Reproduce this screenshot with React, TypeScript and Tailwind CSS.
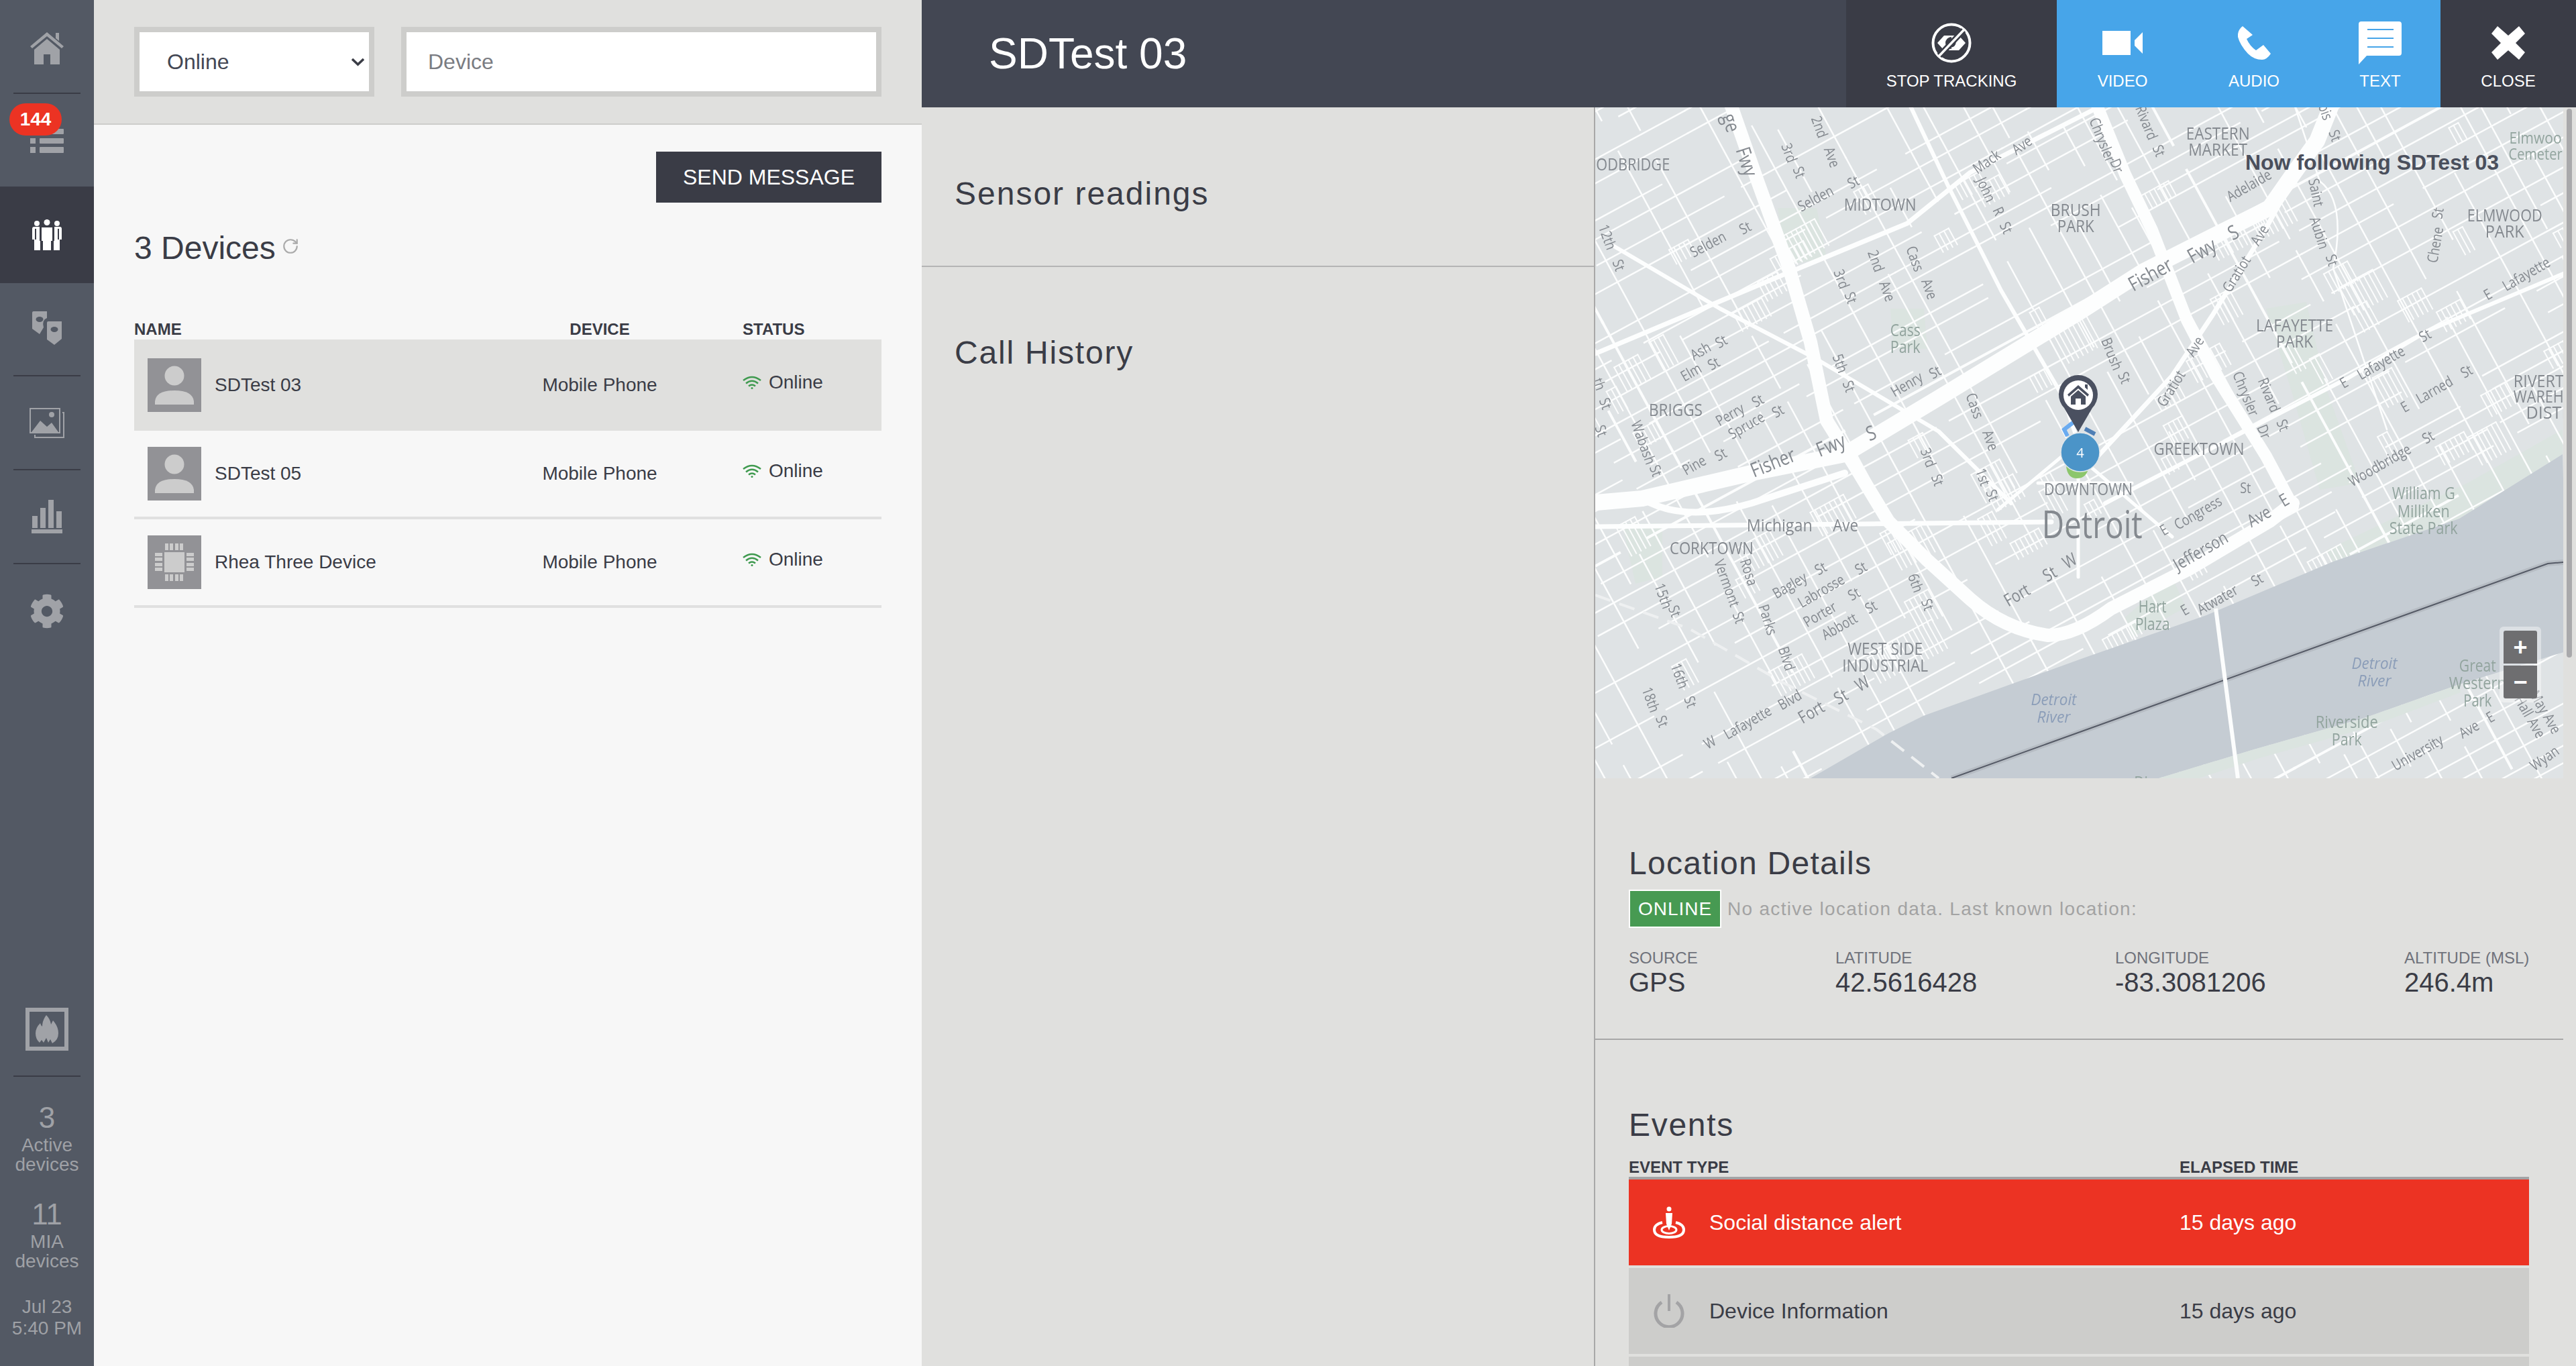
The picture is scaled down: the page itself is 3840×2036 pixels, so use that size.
import React from "react";
import { FaCog } from "react-icons/fa";
import { RotateCw } from "lucide-react";

// ---------- map data ----------
const m = (zx: number, zy: number): [number, number] => [(zx - 8) * 0.9375, zy / 1.552];

type HL = [string, number, number, number, number?, string?];
const H: HL[] = [
  ["ODBRIDGE", 68, 130, 110], ["MIDTOWN", 461, 223, 108], ["BRUSH", 772, 236, 75], ["PARK", 772, 273, 55],
  ["EASTERN", 998, 59, 95], ["MARKET", 998, 96, 88], ["Elmwoo", 1503, 69, 78, 24, "p"], ["Cemeter", 1503, 106, 80, 24, "p"],
  ["ELMWOOD", 1454, 248, 112], ["PARK", 1454, 285, 58], ["LAFAYETTE", 1120, 503, 115], ["PARK", 1120, 540, 55],
  ["RIVERT", 1508, 631, 75], ["WAREH", 1508, 667, 75], ["DISTI", 1520, 705, 60],
  ["Cass", 501, 513, 45, 25, "p"], ["Park", 501, 553, 45, 25, "p"], ["BRIGGS", 136, 698, 80],
  ["GREEKTOWN", 968, 789, 135], ["DOWNTOWN", 792, 881, 132], ["Detroit", 798, 963, 150, 56],
  ["Michigan", 301, 966, 98], ["Ave", 406, 965, 38], ["CORKTOWN", 193, 1018, 125],
  ["WEST SIDE", 469, 1251, 112], ["INDUSTRIAL", 469, 1289, 128], ["Hart", 894, 1153, 42, 25, "p"], ["Plaza", 894, 1193, 52, 25, "p"],
  ["William G", 1325, 891, 94, 25, "p"], ["Milliken", 1325, 932, 78, 25, "p"], ["State Park", 1325, 972, 102, 25, "p"],
  ["Detroit", 737, 1368, 68, 24, "w"], ["River", 737, 1408, 50, 24, "w"], ["Detroit", 1247, 1284, 68, 24, "w"], ["River", 1247, 1324, 50, 24, "w"],
  ["Great", 1411, 1290, 55, 25, "p"], ["Western", 1411, 1330, 85, 25, "p"], ["Park", 1411, 1370, 42, 25, "p"],
  ["Riverside", 1203, 1420, 93, 25, "p"], ["Park", 1203, 1460, 45, 25, "p"], ["Dieppe", 902, 1560, 70, 25, "p"],
];
type RL = [string, number, number, number, number?];
const R: RL[] = [
  ["Fisher", 890, 385, -29, 30], ["Fwy", 972, 330, -29, 30], ["S", 1022, 288, -29, 30], ["Fisher", 290, 820, -22, 30], ["Fwy", 382, 780, -22, 30], ["S", 446, 752, -22, 30],
  ["Gratiot", 1027, 385, -58], ["Ave", 1064, 295, -58], ["Gratiot", 923, 650, -58], ["Ave", 961, 553, -58],
  ["E", 1427, 432, -30], ["Lafayette", 1488, 385, -30], ["E", 1198, 636, -30], ["Lafayette", 1257, 590, -30], ["St", 1327, 527, -30],
  ["E", 1295, 692, -30], ["Larned", 1342, 653, -30], ["St", 1393, 610, -30], ["Woodbridge", 1255, 827, -30], ["St", 1332, 762, -30],
  ["E", 912, 977, -30], ["Congress", 966, 937, -30], ["St", 1042, 880, 0], ["Jefferson", 970, 1025, -30, 26], ["Ave", 1063, 945, -30, 26], ["E", 1103, 907, -30, 26],
  ["Fort", 678, 1127, -30, 26], ["St", 730, 1078, -30, 26], ["W", 762, 1048, -30, 26], ["Fort", 351, 1398, -30, 26], ["St", 398, 1362, -30, 26], ["W", 432, 1332, -30, 26],
  ["W", 190, 1468, -30], ["Lafayette", 250, 1422, -30], ["Blvd", 317, 1370, -30], ["E", 945, 1162, -30], ["Atwater", 997, 1138, -30], ["St", 1060, 1092, -30],
  ["Selden", 358, 210, -28], ["St", 418, 172, -28], ["Selden", 187, 316, -28], ["St", 246, 278, -28], ["Adelaide", 1047, 180, -30],
  ["Ash", 175, 563, -30], ["St", 208, 541, -30], ["Elm", 160, 612, -30], ["St", 196, 592, -30], ["Perry", 222, 710, -30], ["St", 266, 678, -30],
  ["Spruce", 248, 735, -30], ["St", 298, 702, -30], ["Pine", 165, 827, -30], ["St", 207, 802, -30], ["Henry", 503, 640, -30], ["St", 548, 612, -30],
  ["Bagley", 317, 1105, -30], ["St", 366, 1066, -30], ["Labrosse", 367, 1118, -30], ["St", 430, 1065, -30], ["Porter", 365, 1172, -30], ["St", 419, 1125, -30],
  ["Abbott", 396, 1200, -30], ["St", 446, 1155, -30], ["University", 1315, 1492, -30], ["Ave", 1397, 1438, -30], ["E", 1431, 1410, -30], ["Wyan", 1517, 1505, -35],
  ["ge", 225, 35, 72, 30], ["Fwy", 250, 125, 72, 30], ["2nd", 365, 45, 70], ["Ave", 385, 115, 70], ["3rd", 317, 105, 70], ["St", 333, 150, 70],
  ["12th", 28, 300, 70], ["St", 46, 365, 70], ["3rd", 400, 397, 70], ["St", 415, 440, 70], ["2nd", 455, 355, 70], ["Ave", 473, 425, 70],
  ["Cass", 517, 350, 70], ["Ave", 540, 420, 70], ["John", 630, 190, 65], ["R", 650, 240, 65], ["St", 662, 278, 65], ["Mack", 630, 125, -35], ["Ave", 686, 87, -35],
  ["Chrysler", 815, 75, 68], ["Dr", 838, 135, 68], ["Rivard", 885, 35, 68], ["St", 905, 100, 68], ["Saint", 1155, 197, 78], ["Aubin", 1160, 290, 72], ["St", 1180, 353, 72],
  ["ois", 1170, 10, 70], ["St", 1185, 65, 70], ["Chene", 1343, 318, -80], ["St", 1347, 245, -80], ["5th", 398, 592, 70], ["St", 412, 645, 70],
  ["Wabash", 85, 775, 70], ["St", 105, 840, 70], ["3rd", 538, 810, 70], ["St", 553, 862, 70], ["1st", 625, 855, 70], ["St", 640, 897, 70],
  ["Cass", 612, 690, 70], ["Ave", 637, 770, 70], ["Brush", 830, 570, 68], ["St", 850, 625, 68], ["Chrysler", 1043, 662, 68], ["Dr", 1072, 750, 68],
  ["Rivard", 1080, 665, 68], ["St", 1102, 735, 68], ["15th", 117, 1130, 70], ["St", 135, 1165, 70], ["16th", 143, 1315, 70], ["St", 160, 1375, 70],
  ["18th", 97, 1370, 70], ["St", 115, 1420, 70], ["Vermont", 218, 1100, 70], ["St", 237, 1180, 70], ["Rosa", 253, 1075, 72], ["Parks", 283, 1185, 72], ["Blvd", 313, 1275, 72],
  ["6th", 518, 1100, 70], ["St", 537, 1150, 70], ["th", 15, 640, 70], ["St", 25, 685, 70], ["St", 18, 748, 70],
  ["May", 1510, 1375, 60], ["Ave", 1530, 1425, 60], ["Hall", 1485, 1385, 60], ["Ave", 1505, 1435, 60],
];

let seed = 12345;
const rnd = () => {
  seed = (seed * 1664525 + 1013904223) % 4294967296;
  return seed / 4294967296;
};
const ux = Math.cos((-28.5 * Math.PI) / 180);
const uy = Math.sin((-28.5 * Math.PI) / 180);
const vx = -uy;
const vy = ux;
const CX = 720;
const CY = 500;
const pt = (a: number, b: number) => [CX + ux * a + vx * b, CY + uy * a + vy * b];

type Seg = { d: string; w: number };
const buildGrid = (): Seg[] => {
  const out: Seg[] = [];
  const line = (a1: number, b1: number, a2: number, b2: number, w: number) => {
    const p = pt(a1, b1);
    const q = pt(a2, b2);
    out.push({ d: `M${p[0].toFixed(1)} ${p[1].toFixed(1)}L${q[0].toFixed(1)} ${q[1].toFixed(1)}`, w });
  };
  // streets running north-east
  for (let b = -1000; b < 1000; b += 20 + rnd() * 24) {
    let a = -1100 + rnd() * 100;
    const w = rnd() < 0.16 ? 4 : 2.500;
    while (a < 1100) {
      const len = 80 + rnd() * 300;
      if (rnd() > 0.14) line(a, b, a + len, b, w);
      a += len + (rnd() < 0.5 ? 0 : 20 + rnd() * 40);
    }
  }
  // streets running south-east
  for (let a = -1100; a < 1100; a += 26 + rnd() * 30) {
    let b = -1000 + rnd() * 100;
    const w = rnd() < 0.14 ? 4 : 2.500;
    while (b < 1000) {
      const len = 60 + rnd() * 260;
      if (rnd() > 0.2) line(a, b, a, b + len, w);
      b += len + (rnd() < 0.5 ? 0 : 20 + rnd() * 50);
    }
  }
  // alley ladders
  for (let i = 0; i < 90; i++) {
    const a0 = -800 + rnd() * 1600;
    const b0 = -560 + rnd() * 1000;
    const n = 3 + Math.floor(rnd() * 6);
    const l = 20 + rnd() * 30;
    for (let k = 0; k < n; k++) line(a0 + k * 8, b0, a0 + k * 8, b0 + l, 2);
    line(a0, b0, a0 + (n - 1) * 8, b0, 2);
  }
  return out;
};
const GRID = buildGrid();

const highways: [string, number][] = [
  ["M200 -10L242 110L289 240L321 350L345 467L386 533L437 617L493 673L559 733Q610 778 675 787Q715 787 769 747L887 687L1005 617L1040 590", 20],
  ["M-10 590L70 583L233 545L372 517L512 433L722 305L816 245L905 200L1005 150L1040 100L1076 50L1100 -10", 24],
  ["M745 -10L790 100L830 183L882 317L925 400L967 467L1000 520L1040 595", 18],
  ["M-10 625L680 618", 7],
  ["M0 367L279 250L465 173L559 97L740 5", 7],
  ["M28 207L186 300L326 373L512 483L620 590", 6],
  ["M466 -10L526 117L605 273L698 433L720 500", 6],
  ["M740 530L860 400L920 310L1000 180L1060 70L1100 -5", 7],
  ["M760 590L1123 403L1241 333L1450 245", 6],
  ["M720 500L600 600", 5], ["M720 500L720 700", 5], ["M720 520L860 640", 5], ["M660 560L800 560", 5],
  ["M1040 -10L1080 110Q1120 140 1100 240L1180 480", 2.500],
  ["M70 583Q130 620 233 590L372 545", 10],
];

function MapSvg() {
  return (
    <svg viewBox="0 0 1443 1000" className="block w-[1443px] h-[1000px] blur-[0.4px]">
      <rect width="1443" height="1000" fill="#dfe3e5" />
      <g fill="#dbe4e0">
        <polygon points="272,150 330,150 345,225 285,235" />
        <polygon points="440,300 490,300 495,360 445,360" />
        <polygon points="1000,300 1060,290 1090,420 1140,560 1080,570 1040,430" />
        <polygon points="1090,660 1300,560 1442,480 1442,517 1288,613 1100,677" />
        <polygon points="790,760 860,700 880,745 800,790" />
        <polygon points="40,620 100,620 100,700 60,710" />
      </g>
      <g stroke="#fcfdfd" fill="none" strokeLinecap="square">
        {GRID.map((s, i) => (
          <path key={i} d={s.d} strokeWidth={s.w} />
        ))}
      </g>
      <polygon points="321,1000 437,933 489,907 730,820 911,757 1100,677 1288,613 1442,517 1450,810 1288,860 1147,910 982,957 840,1000" fill="#c5ccd3" />
      <polygon points="840,1000 982,957 1147,910 1288,860 1290,872 1150,925 990,970 900,1000" fill="#dbe4e0" />
      <path d="M531 1000L1420 680L1443 678" fill="none" stroke="#b6bcc3" strokeWidth="8" />
      <path d="M531 1000L1420 680L1443 678" fill="none" stroke="#555a66" strokeWidth="2" />
      <path d="M925 747L958 1000" fill="none" stroke="#fcfdfd" strokeWidth="6" />
      <path d="M0 727L140 777L279 857L419 927L512 1000" fill="none" stroke="#eef0f1" strokeWidth="4" strokeDasharray="24 14" />
      <g stroke="#fdfefe" fill="none" strokeLinejoin="round" strokeLinecap="round">
        {highways.map(([d, w], i) => (
          <path key={i} d={d} strokeWidth={w} />
        ))}
      </g>
      <g className="font-['Open_Sans',sans-serif]">
        {H.map(([t, zx, zy, w, size, kind], i) => {
          const [x, y] = m(zx, zy);
          const fill = kind === "p" ? "#92a49e" : kind === "w" ? "#8b9db8" : "#84898f";
          return (
            <text key={i} x={x} y={y} textAnchor="middle" dominantBaseline="central" fontSize={size ?? 25} textLength={w} lengthAdjust="spacingAndGlyphs" fill={fill} fontStyle={kind === "w" ? "italic" : "normal"}>
              {t}
            </text>
          );
        })}
        {R.map(([t, zx, zy, rot, size], i) => {
          const [x, y] = m(zx, zy);
          return (
            <text key={i} transform={`translate(${x} ${y}) rotate(${rot}) scale(0.82 1)`} textAnchor="middle" dominantBaseline="central" fontSize={size ?? 22} fill="#84898f">
              {t}
            </text>
          );
        })}
      </g>
      {/* markers */}
      <path d="M712 470L699 480L704 490" fill="none" stroke="#6aabf0" strokeWidth="6" />
      <path d="M730 479L745 487" fill="none" stroke="#4f7fb5" strokeWidth="6" />
      <path d="M702 535Q704 553 718 553Q733 553 736 535Z" fill="#8cc66c" />
      <circle cx="723" cy="514" r="29" fill="#4b94c8" stroke="#dfe6ea" strokeWidth="1.500" />
      <text x="723" y="514" textAnchor="middle" dominantBaseline="central" fontSize="20" fill="#fff" className="font-['Open_Sans',sans-serif]">4</text>
      <path d="M720 484L699 448A29 29 0 1 1 741 448Z" fill="#4a5060" />
      <circle cx="720" cy="429" r="22" fill="#fff" />
      <path d="M720 414L736 428L734 431L720 419L706 431L704 428ZM730 413h4v8l-4-3.500ZM709 431L720 421.500L731 431V443H724V434H716V443H709Z" fill="#4a5060" />
    </svg>
  );
}

// ---------- icons ----------
const HomeIcon = () => (
  <svg width="50" height="48" viewBox="0 0 50 48" fill="#a0a2a7">
    <path d="M25 0L50 21L47 24L25 6L3 24L0 21ZM38 1H43V13L38 9ZM6 26L25 10L44 26V48H30V33H20V48H6Z" />
  </svg>
);
const ListIcon = () => (
  <svg width="50" height="36" viewBox="0 0 50 36" fill="#a0a2a7">
    <rect x="0" y="0" width="8" height="8" /><rect x="14" y="0" width="36" height="8" rx="1" />
    <rect x="0" y="14" width="8" height="8" /><rect x="14" y="14" width="36" height="8" rx="1" />
    <rect x="0" y="27" width="8" height="9" /><rect x="14" y="27" width="36" height="9" rx="1" />
  </svg>
);
const PeopleIcon = () => (
  <svg width="44" height="46" viewBox="0 0 44 46" fill="#fff">
    <circle cx="22" cy="4.500" r="4.500" /><circle cx="7" cy="6" r="4" /><circle cx="37" cy="6" r="4" />
    <path d="M14 12H30V32H28V46H16V32H14Z" />
    <path d="M0 14Q0 11 3 11H11V32H12V46H3V30H0ZM33 11H41Q44 11 44 14V30H41V46H32V32H33Z" />
    <rect x="4" y="14" width="2" height="16" fill="#3a3c46" /><rect x="38" y="14" width="2" height="16" fill="#3a3c46" />
  </svg>
);
const GeoIcon = () => (
  <svg width="44" height="50" viewBox="0 0 44 50" fill="#a0a2a7">
    <path d="M0 2Q0 0 2 0H22V10Q14 13 17 24L11 34L0 26Z" />
    <path d="M22 17Q22 15 24 15H44V41L33 50L22 42Z" />
    <ellipse cx="11" cy="12" rx="5.500" ry="4" fill="#535964" /><ellipse cx="33" cy="27" rx="5.500" ry="4" fill="#535964" />
  </svg>
);
const ImageIcon = () => (
  <svg width="52" height="45" viewBox="0 0 52 45" fill="none" stroke="#a0a2a7" strokeWidth="2">
    <path d="M49 7H51V44H8V40" />
    <rect x="1" y="1" width="44" height="36" />
    <path d="M3 36L16 19L26 28L33 22L43 36Z" fill="#a0a2a7" stroke="none" />
    <circle cx="33" cy="10" r="4" fill="#a0a2a7" stroke="none" />
  </svg>
);
const ChartIcon = () => (
  <svg width="46" height="50" viewBox="0 0 46 50" fill="#a0a2a7">
    <rect x="1" y="24" width="8" height="18" /><rect x="13" y="12" width="8" height="30" /><rect x="25" y="0" width="8" height="42" /><rect x="37" y="17" width="8" height="25" />
    <rect x="0" y="44" width="46" height="6" />
  </svg>
);
const FlameBox = () => (
  <div className="w-[64px] h-[64px] border-[6px] border-[#a0a2a7] flex items-center justify-center">
    <svg width="34" height="42" viewBox="0 0 34 42" fill="#a0a2a7">
      <path d="M16 0Q22 6 23 14Q25 10 26 8Q34 17 34 27Q34 37 25 42L22 36L19 41L16 34L12 41L9 37L6 41Q0 36 0 27Q0 19 7 12Q8 16 10 17Q10 8 16 0Z" />
    </svg>
  </div>
);
const StopTrack = () => (
  <svg width="60" height="60" viewBox="0 0 60 60" fill="none" stroke="#fff" strokeWidth="4">
    <circle cx="30" cy="30" r="27.500" />
    <path d="M9 30L19 19H41L51 30L41 41H19Z" strokeWidth="0" fill="#fff" />
    <circle cx="30" cy="30" r="9" fill="#3a3c46" strokeWidth="0" />
    <path d="M30 22A8 8 0 0 1 30 38" stroke="#fff" strokeWidth="3" />
    <path d="M12 49L48 11" stroke="#3a3c46" strokeWidth="9" />
    <path d="M11 50L49 10" strokeWidth="3.500" />
  </svg>
);
const VideoIcon = () => (
  <svg width="60" height="36" viewBox="0 0 60 36" fill="#fff">
    <rect x="0" y="0" width="42" height="36" />
    <path d="M48 14L60 2V34L48 22Z" />
  </svg>
);
const PhoneIcon = () => (
  <svg width="49" height="50" viewBox="0 0 49 50" fill="#fff">
    <path d="M7 0L22 13L13 19Q18 30 27 36L38 28L49 41Q43 50 36 50Q24 50 15 41Q3 28 0 16Q-1 6 7 0Z" />
  </svg>
);
const BubbleIcon = () => (
  <svg width="64" height="64" viewBox="0 0 64 64">
    <path d="M4 0H60Q64 0 64 4V47Q64 51 60 51H12L0 64V4Q0 0 4 0Z" fill="#fff" />
    <path d="M13 12H52M13 25H52M13 38H52" stroke="#47a5e9" strokeWidth="2" />
  </svg>
);
const CloseIcon = () => (
  <svg width="50" height="50" viewBox="0 0 50 50" fill="#fff">
    <path d="M0 11L9 0L25 14L41 0L50 11L36 25L50 39L41 50L25 36L9 50L0 39L14 25Z" />
  </svg>
);
const WifiIcon = () => (
  <svg width="28" height="20" viewBox="0 0 28 20" fill="none" stroke="#3f9a4f" strokeWidth="2.500" className="shrink-0">
    <path d="M1 7Q14 -3 27 7M5 11.500Q14 4 23 11.500M9 15.500Q14 11.500 19 15.500" />
    <circle cx="14" cy="18.500" r="1.500" fill="#3f9a4f" stroke="none" />
  </svg>
);
const PersonThumb = () => (
  <svg width="80" height="80" viewBox="0 0 80 80" className="shrink-0">
    <rect width="80" height="80" fill="#929296" />
    <ellipse cx="40" cy="26" rx="14.500" ry="14.500" fill="#cccccc" />
    <path d="M11 69V64Q13 48 40 48Q67 48 69 64V69Z" fill="#cccccc" />
  </svg>
);
const ChipThumb = () => (
  <svg width="80" height="80" viewBox="0 0 80 80" className="shrink-0" fill="#cccccc">
    <rect width="80" height="80" fill="#929296" />
    <rect x="25" y="25" width="30" height="30" />
    {[26, 33, 41, 48].map((x) => (
      <React.Fragment key={x}>
        <rect x={x} y="12" width="5" height="10" /><rect x={x} y="58" width="5" height="10" />
      </React.Fragment>
    ))}
    {[26, 33, 41, 48].map((y) => (
      <React.Fragment key={y}>
        <rect x="11" y={y} width="11" height="5" /><rect x="58" y={y} width="11" height="5" />
      </React.Fragment>
    ))}
  </svg>
);
const TargetPerson = () => (
  <svg width="48" height="48" viewBox="0 0 48 48" fill="none" stroke="#fff">
    <circle cx="24" cy="4" r="3.500" fill="#fff" stroke="none" />
    <path d="M19 10H29L28 26L24 36L20 26Z" fill="#fff" stroke="none" />
    <path d="M14 24Q2 27 2 35Q2 46 24 46Q46 46 46 35Q46 27 34 24" strokeWidth="4" />
    <ellipse cx="24" cy="35" rx="11" ry="5.500" strokeWidth="3" />
  </svg>
);
const PowerIcon = () => (
  <svg width="46" height="50" viewBox="0 0 46 50" fill="none" stroke="#a3a3a5" strokeWidth="5">
    <path d="M12 12A20 20 0 1 0 34 12" />
    <path d="M23 0V25" strokeWidth="4" />
  </svg>
);

// ---------- page parts ----------
const Rule = () => <div className="mx-[20px] h-[2px] bg-[#3a3c46] shrink-0" />;

const Nav = ({ children, h, active }: { children: React.ReactNode; h: string; active?: boolean }) => (
  <div className={`${h} ${active ? "bg-[#3a3c46]" : ""} flex items-center justify-center shrink-0`}>{children}</div>
);

const Stat = ({ n, a, b }: { n: string; a: string; b: string }) => (
  <div className="flex flex-col items-center">
    <div className="text-[44px] leading-[44px]">{n}</div>
    <div className="mt-[4px] text-[28px] leading-[29px]">{a}</div>
    <div className="text-[28px] leading-[29px]">{b}</div>
  </div>
);

function Sidebar() {
  return (
    <aside className="relative w-[140px] shrink-0 bg-[#535964] flex flex-col text-[#9fa1a6]">
      <Nav h="h-[138px] pt-[6px]"><HomeIcon /></Nav>
      <Rule />
      <Nav h="h-[138px] pt-[2px]"><ListIcon /></Nav>
      <div className="absolute left-[14px] top-[154px] w-[78px] h-[48px] rounded-full bg-[#ec3323] text-white text-[28px] font-bold flex items-center justify-center">144</div>
      <Nav h="h-[144px]" active><PeopleIcon /></Nav>
      <Nav h="h-[137px] pb-[4px]"><GeoIcon /></Nav>
      <Rule />
      <Nav h="h-[138px]"><ImageIcon /></Nav>
      <Rule />
      <Nav h="h-[138px]"><ChartIcon /></Nav>
      <Rule />
      <Nav h="h-[140px]"><FaCog size={52} color="#a0a2a7" /></Nav>
      <div className="mt-auto flex justify-center"><FlameBox /></div>
      <div className="mt-[37px]"><Rule /></div>
      <div className="mt-[39px] flex flex-col gap-[38px] pb-[40px]">
        <Stat n="3" a="Active" b="devices" />
        <Stat n="11" a="MIA" b="devices" />
        <div className="text-center text-[28px] leading-[32px]">
          <div>Jul 23</div>
          <div>5:40 PM</div>
        </div>
      </div>
    </aside>
  );
}

const devices = [
  { name: "SDTest 03", chip: false, active: true },
  { name: "SDTest 05", chip: false, active: false },
  { name: "Rhea Three Device", chip: true, active: false },
];

function DevicePanel() {
  return (
    <section className="w-[1234px] shrink-0 bg-[#f7f7f7] text-[#3a3c46] flex flex-col">
      <div className="h-[186px] bg-[#e0e0de] border-b-2 border-[#cdcdcb] pl-[60px] pr-[60px] pt-[40px] flex gap-[40px] shrink-0">
        <div className="relative w-[358px] h-[104px]">
          <select defaultValue="Online" className="w-full h-full border-8 border-[#cdcdcb] bg-white pl-[41px] text-[32px] text-[#434753] appearance-none outline-none rounded-none">
            <option>Online</option>
          </select>
          <svg className="absolute left-[324px] top-[45px]" width="19" height="14" viewBox="0 0 19 14" fill="none" stroke="#3a3c46" strokeWidth="3.500"><path d="M1 3L9.500 11L18 3" /></svg>
        </div>
        <input placeholder="Device" className="flex-1 min-w-0 h-[104px] border-8 border-[#cdcdcb] bg-white pl-[32px] text-[32px] text-[#434753] placeholder:text-[#7a7c82] outline-none" />
      </div>
      <div className="px-[60px] flex flex-col">
        <div className="mt-[40px] flex justify-end">
          <button className="w-[336px] h-[76px] bg-[#3a3c46] text-white text-[32px]">SEND MESSAGE</button>
        </div>
        <div className="mt-[40px] h-[56px] flex items-center">
          <h2 className="text-[48px] leading-[56px] font-normal">3 Devices</h2>
          <RotateCw size={26} color="#aaaaaa" className="ml-[9px] -mt-[6px]" />
        </div>
        <div className="mt-[80px] h-[28px] grid grid-cols-[560px_268px_1fr] text-[24px] leading-[26px] font-bold">
          <div>NAME</div>
          <div className="text-center">DEVICE</div>
          <div className="pl-[79px]">STATUS</div>
        </div>
        {devices.map((d) => (
          <div key={d.name} className={`grid grid-cols-[560px_268px_1fr] items-center ${d.active ? "h-[136px] bg-[#e0e0de]" : "h-[132px] border-b-4 border-[#e0e0e0]"}`}>
            <div className="flex items-center pl-[20px] gap-[20px]">
              {d.chip ? <ChipThumb /> : <PersonThumb />}
              <span className="text-[28px]">{d.name}</span>
            </div>
            <div className="text-center text-[28px]">Mobile Phone</div>
            <div className="pl-[79px] flex items-center gap-[11px] text-[28px] mb-[8px]">
              <WifiIcon />
              <span>Online</span>
            </div>
          </div>
        ))}
      </div>
    </section>
  );
}

function TopBar() {
  return (
    <header className="h-[160px] shrink-0 bg-[#434753] flex items-stretch">
      <div className="w-[1378px] pl-[100px] flex items-center text-white text-[64px]">SDTest 03</div>
      <div className="relative w-[314px] bg-[#3a3c46]">
        <div className="absolute inset-x-0 top-[34px] flex justify-center"><StopTrack /></div>
        <div className="absolute inset-x-0 top-[107px] text-center text-white text-[24px] leading-[28px]">STOP TRACKING</div>
      </div>
      <div className="w-[572px] bg-[#47a5e9] flex">
        <div className="relative w-[196px]">
          <div className="absolute inset-x-0 top-[46px] flex justify-center"><VideoIcon /></div>
          <div className="absolute inset-x-0 top-[107px] text-center text-white text-[24px] leading-[28px]">VIDEO</div>
        </div>
        <div className="relative w-[196px]">
          <div className="absolute inset-x-0 top-[39px] flex justify-center"><PhoneIcon /></div>
          <div className="absolute inset-x-0 top-[107px] text-center text-white text-[24px] leading-[28px]">AUDIO</div>
        </div>
        <div className="relative w-[180px]">
          <div className="absolute inset-x-0 top-[32px] flex justify-center"><BubbleIcon /></div>
          <div className="absolute inset-x-0 top-[107px] text-center text-white text-[24px] leading-[28px]">TEXT</div>
        </div>
      </div>
      <div className="relative flex-1 bg-[#3a3c46]">
        <div className="absolute inset-x-0 top-[39px] flex justify-center"><CloseIcon /></div>
        <div className="absolute inset-x-0 top-[107px] text-center text-white text-[24px] leading-[28px]">CLOSE</div>
      </div>
    </header>
  );
}

const Coord = ({ label, value }: { label: string; value: string }) => (
  <div className="whitespace-nowrap">
    <div className="text-[24px] leading-[28px] text-[#6f727b]">{label}</div>
    <div className="text-[40px] leading-[44px] text-[#3a3c46]">{value}</div>
  </div>
);

const EventRow = ({ icon, label, cls }: { icon: React.ReactNode; label: string; cls: string }) => (
  <div className={`h-[128px] shrink-0 grid grid-cols-[821px_1fr] items-center text-[32px] ${cls}`}>
    <div className="flex items-center">
      <div className="w-[120px] flex justify-center">{icon}</div>
      <span>{label}</span>
    </div>
    <div>15 days ago</div>
  </div>
);

function DetailPane() {
  return (
    <div className="relative flex-1 min-w-0 border-l-2 border-[#a8a8a8] h-full overflow-hidden">
      <div className="w-[1443px]">
        <div className="relative h-[1000px] overflow-hidden">
          <MapSvg />
          <div className="absolute left-[969px] top-[64px] text-[32px] leading-[36px] font-bold text-[#4a4f5c] whitespace-nowrap">Now following SDTest 03</div>
          <div className="absolute left-[1348px] top-[774px] w-[62px] h-[113px] rounded-[6px] bg-white/40 p-[6px] flex flex-col gap-[3px]">
            <div className="h-[49px] bg-[#6e6e70] rounded-t-[3px] flex items-center justify-center text-white text-[36px] font-bold leading-none">+</div>
            <div className="h-[49px] bg-[#6e6e70] rounded-b-[3px] flex items-center justify-center text-white text-[36px] font-bold leading-none">−</div>
          </div>
        </div>
        <div className="pl-[50px] pr-[51px] pt-[99px] pb-[62px] border-b-2 border-[#a8a8a8]">
          <h3 className="text-[48px] leading-[56px] tracking-[1.300px] font-normal">Location Details</h3>
          <div className="mt-[11px] flex items-center">
            <div className="w-[138px] h-[57px] bg-[#479a52] border-2 border-white text-white text-[28px] tracking-[1px] flex items-center justify-center">ONLINE</div>
            <div className="ml-[9px] text-[28px] tracking-[1.300px] text-[#a3a3a3]">No active location data. Last known location:</div>
          </div>
          <div className="mt-[31px] grid grid-cols-[308px_417px_431px_auto]">
            <Coord label="SOURCE" value="GPS" />
            <Coord label="LATITUDE" value="42.5616428" />
            <Coord label="LONGITUDE" value="-83.3081206" />
            <Coord label="ALTITUDE (MSL)" value="246.4m" />
          </div>
        </div>
        <div className="pl-[50px] pr-[51px] pt-[99px]">
          <h3 className="text-[48px] leading-[56px] tracking-[1.7px] font-normal">Events</h3>
          <div className="mt-[21px] grid grid-cols-[821px_1fr] text-[24px] leading-[28px] font-bold border-b-4 border-[#a3a3a5]">
            <div>EVENT TYPE</div>
            <div>ELAPSED TIME</div>
          </div>
          <div className="flex flex-col gap-[4px]">
            <EventRow icon={<TargetPerson />} label="Social distance alert" cls="bg-[#ec3323] text-white" />
            <EventRow icon={<PowerIcon />} label="Device Information" cls="bg-[#cdcdcb] text-[#3a3c46]" />
            <div className="h-[128px] bg-[#cdcdcb]" />
          </div>
        </div>
      </div>
      <div className="absolute left-[1448px] top-[2px] w-[8px] h-[818px] rounded-full bg-[#a9a9ab]" />
    </div>
  );
}

export default function App() {
  return (
    <div className="w-[3840px] h-[2036px] flex overflow-hidden bg-[#e0e0de] font-['Liberation_Sans',Arial,sans-serif] text-[#3a3c46]">
      <Sidebar />
      <DevicePanel />
      <div className="flex-1 min-w-0 flex flex-col h-full">
        <TopBar />
        <div className="flex-1 min-h-0 flex">
          <div className="w-[1002px] shrink-0 flex flex-col">
            <div className="h-[238px] border-b-2 border-[#b5b5b5] pl-[49px] pt-[22px] flex items-center">
              <h3 className="text-[48px] leading-[56px] tracking-[2px] font-normal">Sensor readings</h3>
            </div>
            <div className="pl-[49px] pt-[100px]">
              <h3 className="text-[48px] leading-[56px] tracking-[1.800px] font-normal">Call History</h3>
            </div>
          </div>
          <DetailPane />
        </div>
      </div>
    </div>
  );
}
